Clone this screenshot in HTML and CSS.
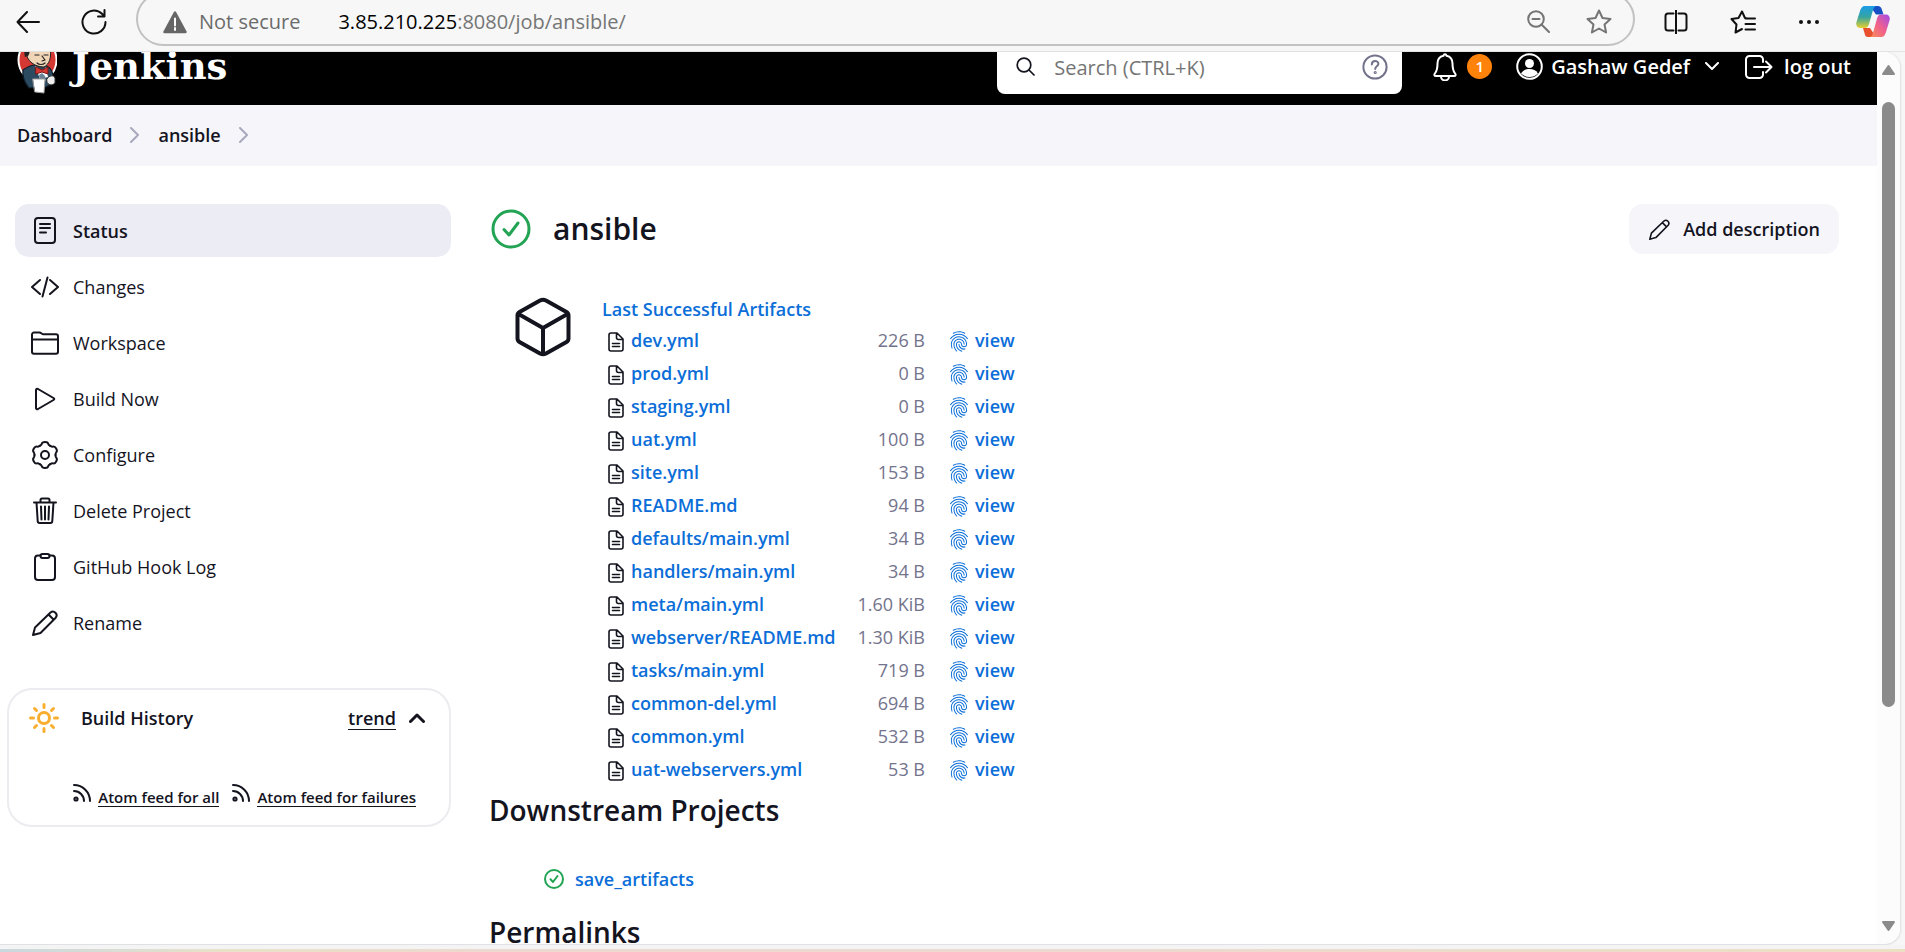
FILE: index.html
```html
<!DOCTYPE html>
<html lang="en">
<head>
<meta charset="utf-8">
<title>ansible [Jenkins]</title>
<link rel="stylesheet" href="styles.css">
</head>
<body>
<svg class="sprite" aria-hidden="true">
  <symbol id="doc" viewBox="0 0 16 20"><path d="M3 1h6l6 6v10a2 2 0 0 1-2 2H3a2 2 0 0 1-2-2V3a2 2 0 0 1 2-2zM8.500 1v4.500a2 2 0 0 0 2 2H15M4.500 11.500h7M4.500 14.500h7"/></symbol>
  <symbol id="print" viewBox="50 10 412 492"><path d="M390.42 75.28a10.45 10.45 0 01-5.32-1.44C340.72 50.08 302.35 40 256.35 40c-45.77 0-89.23 11.28-128.76 33.84C122 77 115.11 74.8 111.87 69a12.4 12.4 0 014.63-16.32A281.81 281.81 0 01256.35 16c49.23 0 92.23 11.28 139.39 36.48a12 12 0 014.85 16.08 11.3 11.3 0 01-10.17 6.72zM59.63 201.28a11.73 11.73 0 01-6.7-2.16 12.26 12.26 0 01-2.78-16.8c22.89-33.6 52-60 86.69-78.48 72.58-38.84 165.51-39.12 238.32-.24 34.68 18.48 63.8 44.64 86.69 78a12.29 12.29 0 01-2.78 16.8 11.26 11.26 0 01-16.18-2.88c-20.8-30.24-47.15-54-78.36-70.56-66.34-35.28-151.18-35.28-217.29.24-31.44 16.8-57.79 40.8-78.59 71a10 10 0 01-9.02 5.08zM204.1 491a10.66 10.66 0 01-8.09-3.6C175.9 466.48 165 453 149.55 424c-16-29.52-24.27-65.52-24.27-104.16 0-71.28 58.94-129.36 131.3-129.36S387.88 248.56 387.88 319.84a11.56 11.56 0 11-23.11 0c0-57.84-48.54-105.12-108.19-105.12S148.39 262 148.39 319.84c0 34.56 7.4 66.48 21.5 92.4 14.79 27.6 25 39.36 42.77 58.08a12.67 12.67 0 010 17 12.44 12.44 0 01-8.56 3.68zm165.75-44.4c-27.51 0-51.78-7.2-71.66-21.36a129.1 129.1 0 01-55-105.36 11.57 11.57 0 1123.12 0 104.28 104.28 0 0044.84 85.44c16.41 11.52 35.6 17 58.72 17a147.41 147.41 0 0024-2.4c6.24-1.2 12.25 3.12 13.4 9.84a11.92 11.92 0 01-9.47 13.92 152.28 152.28 0 01-27.95 2.88zM323.38 496a13 13 0 01-3-.48c-36.76-10.56-60.8-24.72-86-50.4-32.37-33.36-50.16-77.76-50.16-125.28 0-38.88 31.9-70.56 71.19-70.56s71.2 31.68 71.2 70.56c0 25.68 21.5 46.56 48.08 46.56s48.08-20.88 48.08-46.56c0-90.48-75.13-163.92-167.59-163.92-65.65 0-125.75 37.92-152.79 96.72-9 19.44-13.64 42.24-13.64 67.2 0 18.72 1.61 48.24 15.48 86.64 2.32 6.24-.69 13.2-6.7 15.36a11.34 11.34 0 01-14.79-7 276.39 276.39 0 01-16.88-95c0-28.8 5.32-55 15.72-77.76 30.75-67 98.94-110.4 173.6-110.4 105.18 0 190.71 84.24 190.71 187.92 0 38.88-31.9 70.56-71.2 70.56s-71.2-31.68-71.2-70.56c.01-25.68-21.49-46.56-48.07-46.56s-48.08 20.88-48.08 46.56c0 41 15.26 79.44 43.23 108.24 22 22.56 43 35 75.59 44.16 6.24 1.68 9.71 8.4 8.09 14.64a11.39 11.39 0 01-10.87 9.16z"/></symbol>
  <symbol id="pencil" viewBox="0 0 26 26"><path d="M1 25l2-7.500L18.500 2.500a3.700 3.700 0 0 1 5.200 5.200L8.500 23zM16.500 4.500l5 5M1 25l7.500-2"/></symbol>
  <symbol id="ok" viewBox="0 0 40 40"><circle cx="20" cy="20" r="18"/><path d="M13 20.500l5 5.500 9-12"/></symbol>
  <symbol id="rss" viewBox="0 0 18 18"><circle cx="3" cy="15" r="1.600"/><path d="M1 7a10 10 0 0 1 10 10M1 1a16 16 0 0 1 16 16"/></symbol>
  <symbol id="next" viewBox="0 0 10 16"><path d="M1 1l7 7-7 7"/></symbol>
</svg>

<header class="chrome">
  <button class="tool back" aria-label="Back"><svg width="24" height="22" viewBox="0 0 24 22"><path d="M23 11H1.500M11 1L1.500 11l9.500 10"/></svg></button>
  <button class="tool" aria-label="Refresh"><svg width="26" height="26" viewBox="0 0 26 26"><path d="M24.500 13A11.500 11.500 0 1 1 21 4.800L23.500 7.500M23.500 1v6.500H17"/></svg></button>
  <div class="address">
    <svg class="warn" width="24" height="24" viewBox="0 0 24 24"><path d="M12 2.500L22.500 22h-21z" fill="#666" stroke="#666" stroke-width="2.500" stroke-linejoin="round"/><path d="M12 8.500v7M12 18v2" stroke="#fff" stroke-width="2"/></svg>
    <span class="insecure">Not secure</span>
    <p class="url"><b>3.85.210.225</b>:8080/job/ansible/</p>
    <button class="tool grey" aria-label="Zoom"><svg width="23" height="23" viewBox="0 0 23 23"><circle cx="9" cy="9" r="7.800"/><path d="M5.500 9h7M14.500 14.500l7.500 7.500"/></svg></button>
    <button class="tool grey" aria-label="Favorite"><svg width="26" height="25" viewBox="0 0 26 25"><path d="M13 1.500l3.500 7.500 8 1-6 5.500 1.600 8L13 19.500l-7.100 4 1.600-8-6-5.500 8-1z"/></svg></button>
  </div>
  <div class="actions">
    <button class="tool" aria-label="Split screen"><svg width="24" height="24" viewBox="0 0 24 24"><path d="M9.500 3.500H4A2.500 2.500 0 0 0 1.500 6v12A2.500 2.500 0 0 0 4 20.500h5.500M12 0v24M14.500 3.500H20A2.500 2.500 0 0 1 22.500 6v12a2.500 2.500 0 0 1-2.500 2.500h-5.500"/></svg></button>
    <button class="tool" aria-label="Favorites"><svg width="26" height="24" viewBox="0 0 26 24"><path d="M17.500 8.500L15 8l-3-6.500L8.500 8l-7 1 5 5.500L5.500 22.500l6.500-3.500M15.500 8.500H25M15.500 14H25M15.500 19.500H25"/></svg></button>
    <button class="tool dots" aria-label="More"><svg width="22" height="6" viewBox="0 0 22 6"><circle cx="3" cy="3" r="2"/><circle cx="11" cy="3" r="2"/><circle cx="19" cy="3" r="2"/></svg></button>
    <button class="tool plain" aria-label="Copilot"><svg width="34" height="31" viewBox="0 0 34 31">
      <defs>
        <linearGradient id="ca" x1="0" y1="0" x2="0" y2="1"><stop offset="0" stop-color="#1a9be8"/><stop offset=".5" stop-color="#35a5a0"/><stop offset="1" stop-color="#e8d02d"/></linearGradient>
        <linearGradient id="cb" x1="1" y1="0" x2="0" y2="1"><stop offset="0" stop-color="#a24be8"/><stop offset=".5" stop-color="#f0608c"/><stop offset="1" stop-color="#f99254"/></linearGradient>
      </defs>
      <path d="M14 0h8c2 0 3 1 4 4l1.500 4.500H20z" fill="#1750c5"/>
      <path d="M12 31h8l-6-9H7l1.500 5c.6 3 1.500 4 3.500 4z" fill="#e8502e"/>
      <path d="M9 0h12c-2 0-3 1-4 4l-4 14c-.8 2.800-2 4-4 4H4c-3 0-4.500-3-3.500-6L4 5C5 2 6 0 9 0z" fill="url(#ca)"/>
      <path d="M25 31H13c2 0 3-1 4-4l4-14.500c.8-2.800 2-4 4-4h5c3 0 4.500 3 3.500 6L30 26c-1 3-2 5-5 5z" fill="url(#cb)"/>
    </svg></button>
  </div>
</header>

<div class="window">
  <div class="page">
    <header class="topbar">
      <a class="brand" href="#">
        <svg width="40" height="56" viewBox="0 0 40 56">
          <ellipse cx="20.500" cy="21" rx="19" ry="21" fill="#d33833"/>
          <path d="M6 31c4-3 8-5 13-5h8c5 1 8 5 9 10l1 8-8 4-17 1c-4-5-7-11-6-18z" fill="#2c4a60" stroke="#0d1c26" stroke-width="1.200"/>
          <path d="M9 12C9 5 14 2 21 2s12 3 12.500 10-1 13-6.500 16c-8 0-18-5-18-16z" fill="#f0d6b7" stroke="#222" stroke-width="1"/>
          <path d="M8 18C5 6 12 1 21 1s14 3 13 9c-6-3-16-3-20 0-2 2-1 5-3 7z" fill="#222" stroke="none"/>
          <path d="M18 16h4M27 16h4M25 17l3 4-3 1M20 24c2 2 6 2 8 0" stroke="#222" stroke-width="1.200"/>
          <path d="M18 27l8 5 3-4 2 10-8 2z" fill="#fff" stroke="none"/>
          <path d="M19 28l6 3 6-3v7l-6-2-6 2z" fill="#d33833" stroke="#7c1512" stroke-width="1"/>
          <path d="M22 36l3-2 3 3 1 5-6-1z" fill="#6b8294" stroke="none"/>
          <path d="M16 40h12l-1 14-9-1z" fill="#fff" stroke="#999" stroke-width="1"/>
          <path d="M30 40c2-4 7-4 8-1v5c-3 3-7 2-8-1z" fill="#eee" stroke="#333" stroke-width="1"/>
        </svg>
        <span>Jenkins</span>
      </a>
      <label class="search">
        <svg class="ink glass" width="19" height="19" viewBox="0 0 19 19"><circle cx="8" cy="8" r="6.800"/><path d="M13 13l5 5"/></svg>
        <input type="text" placeholder="Search (CTRL+K)" aria-label="Search">
        <svg class="help" width="26" height="26" viewBox="0 0 26 26"><circle cx="13" cy="13" r="11.600"/><path d="M9.800 10.500c0-4.600 6.600-4.300 6.600-.8 0 2.600-3.200 2.600-3.200 5.300"/><circle cx="13.200" cy="18.500" r=".6"/></svg>
      </label>
      <a class="bell" href="#" aria-label="Notifications"><svg width="24" height="28" viewBox="0 0 24 28"><path d="M12 1.200c-1.200 0-1.500 1.500-1.500 1.500C6.500 3.500 4.500 6.500 4.500 10.500c0 6-.8 7.500-2.300 9.500-1.400 1.800-1 3 .8 3h18c1.800 0 2.200-1.200.8-3-1.500-2-2.300-3.500-2.300-9.500 0-4-2-7-6-7.800 0 0-.3-1.500-1.500-1.500zM8 23.500a4 4 0 0 0 8 0"/></svg><span class="badge">1</span></a>
      <a class="user" href="#"><svg width="27" height="27" viewBox="0 0 27 27"><circle cx="13.500" cy="13.500" r="12.300"/><circle cx="13.500" cy="10.500" r="4.500" fill="#fff" stroke="none"/><path d="M5 20.500c2-3.500 5-4.500 8.500-4.500s6.500 1 8.500 4.500a12 12 0 0 1-17 0z" fill="#fff" stroke="none"/></svg>Gashaw Gedef<svg class="caret" width="14" height="9" viewBox="0 0 14 9"><path d="M1 1l6 6 6-6"/></svg></a>
      <a class="logout" href="#"><svg width="28" height="24" viewBox="0 0 28 24"><path d="M18 7V4.500A3.500 3.500 0 0 0 14.500 1h-10A3.500 3.500 0 0 0 1 4.500v15A3.500 3.500 0 0 0 4.500 23h10a3.500 3.500 0 0 0 3.500-3.500V17M9 12h17.500M21 6.500l5.500 5.500-5.500 5.500"/></svg>log out</a>
    </header>

    <nav class="crumbs">
      <a href="#">Dashboard</a><svg width="10" height="16"><use href="#next"/></svg>
      <a href="#">ansible</a><svg width="10" height="16"><use href="#next"/></svg>
    </nav>

    <div class="body">
      <aside class="side">
        <nav class="tasks">
          <a class="task active" href="#"><svg viewBox="0 0 28 28"><rect x="4" y="1" width="20" height="25" rx="3"/><path d="M9 7h10M9 11h10M9 15.500h6"/></svg>Status</a>
          <a class="task" href="#"><svg viewBox="0 0 28 28"><path d="M9 7l-8 7 8 7M19 7l8 7-8 7M16.500 4.500l-5 19"/></svg>Changes</a>
          <a class="task" href="#"><svg viewBox="0 0 28 28"><path d="M1 10V5.500A2 2 0 0 1 3 3.500h5.500c1.500 0 2 1.700 3.500 1.700h13a2 2 0 0 1 2 2v15.500a2 2 0 0 1-2 2H3a2 2 0 0 1-2-2V10.500h26"/></svg>Workspace</a>
          <a class="task" href="#"><svg viewBox="0 0 28 28"><path d="M5 5v18c0 1 1 1.500 2 1l15.500-9c1-.6 1-1.400 0-2L7 4C6 3.500 5 4 5 5z"/></svg>Build Now</a>
          <a class="task" href="#"><svg viewBox="-14 -14 28 28"><path id="tooth" d="M-5.250 -9.100C-3.700 -10 -3.400 -10.200 -3.200 -11.200C-2.900 -12.600 -2.200 -12.900 0 -12.900S2.900 -12.600 3.200 -11.200C3.400 -10.200 3.700 -10 5.250 -9.100"/><use href="#tooth" transform="rotate(60)"/><use href="#tooth" transform="rotate(120)"/><use href="#tooth" transform="rotate(180)"/><use href="#tooth" transform="rotate(240)"/><use href="#tooth" transform="rotate(300)"/><circle r="4"/></svg>Configure</a>
          <a class="task" href="#"><svg viewBox="0 0 28 28"><path d="M3 5.500h22M5.500 5.500l1.200 18.500a2 2 0 0 0 2 2h10.600a2 2 0 0 0 2-2L22.500 5.500M9.500 5V3a1.500 1.500 0 0 1 1.500-1.500h6A1.500 1.500 0 0 1 18.500 3v2M14 9.500v13M10 9.500l.5 13M18 9.500l-.5 13"/></svg>Delete Project</a>
          <a class="task" href="#"><svg viewBox="0 0 28 28"><path d="M9.500 2.500H7a3 3 0 0 0-3 3V24a3 3 0 0 0 3 3h14a3 3 0 0 0 3-3V5.500a3 3 0 0 0-3-3h-2.500"/><rect x="9.500" y="1" width="9" height="4" rx="2"/></svg>GitHub Hook Log</a>
          <a class="task" href="#"><svg viewBox="-1 -1 28 28"><use href="#pencil" width="26" height="26"/></svg>Rename</a>
        </nav>
        <section class="history">
          <div class="history-head">
            <svg class="sun" width="30" height="30" viewBox="0 0 30 30"><circle cx="15" cy="15" r="5.500"/><path d="M15 1.500v3M15 25.500v3M1.500 15h3M25.500 15h3M5.500 5.500l2 2M22.500 22.500l2 2M5.500 24.500l2-2M22.500 7.500l2-2"/></svg>
            <h2>Build History</h2>
            <a class="under" href="#">trend</a>
            <svg class="ink up" width="16" height="10" viewBox="0 0 16 10"><path d="M1.500 8.500L8 2l6.500 6.500"/></svg>
          </div>
          <div class="feeds">
            <a href="#"><svg width="18" height="18"><use href="#rss"/></svg><span class="under">Atom feed for all</span></a>
            <a href="#"><svg width="18" height="18"><use href="#rss"/></svg><span class="under">Atom feed for failures</span></a>
          </div>
        </section>
      </aside>

      <main class="main">
        <div class="title">
          <svg class="green" width="40" height="40"><use href="#ok"/></svg>
          <h1>ansible</h1>
          <button class="describe"><svg width="21" height="21"><use href="#pencil"/></svg>Add description</button>
        </div>
        <section class="artifacts">
          <svg class="cube" width="56" height="60" viewBox="0 0 56 60"><path d="M25 3.500L4.500 15A4 4 0 0 0 2.500 18.500v23A4 4 0 0 0 4.500 45L25 56.500q3 1.500 6 0L51.500 45a4 4 0 0 0 2-3.500v-23a4 4 0 0 0-2-3.500L31 3.500q-3-1.500-6 0zM3.500 17L28 31 52.500 17M28 31v26"/></svg>
          <div>
            <a class="link" href="#">Last Successful Artifacts</a>
            <table class="files">
              <tr><td><svg class="doc"><use href="#doc"/></svg></td><td><a class="link" href="#">dev.yml</a></td><td class="size">226 B</td><td><a class="link" href="#"><svg class="print"><use href="#print"/></svg>view</a></td></tr>
              <tr><td><svg class="doc"><use href="#doc"/></svg></td><td><a class="link" href="#">prod.yml</a></td><td class="size">0 B</td><td><a class="link" href="#"><svg class="print"><use href="#print"/></svg>view</a></td></tr>
              <tr><td><svg class="doc"><use href="#doc"/></svg></td><td><a class="link" href="#">staging.yml</a></td><td class="size">0 B</td><td><a class="link" href="#"><svg class="print"><use href="#print"/></svg>view</a></td></tr>
              <tr><td><svg class="doc"><use href="#doc"/></svg></td><td><a class="link" href="#">uat.yml</a></td><td class="size">100 B</td><td><a class="link" href="#"><svg class="print"><use href="#print"/></svg>view</a></td></tr>
              <tr><td><svg class="doc"><use href="#doc"/></svg></td><td><a class="link" href="#">site.yml</a></td><td class="size">153 B</td><td><a class="link" href="#"><svg class="print"><use href="#print"/></svg>view</a></td></tr>
              <tr><td><svg class="doc"><use href="#doc"/></svg></td><td><a class="link" href="#">README.md</a></td><td class="size">94 B</td><td><a class="link" href="#"><svg class="print"><use href="#print"/></svg>view</a></td></tr>
              <tr><td><svg class="doc"><use href="#doc"/></svg></td><td><a class="link" href="#">defaults/main.yml</a></td><td class="size">34 B</td><td><a class="link" href="#"><svg class="print"><use href="#print"/></svg>view</a></td></tr>
              <tr><td><svg class="doc"><use href="#doc"/></svg></td><td><a class="link" href="#">handlers/main.yml</a></td><td class="size">34 B</td><td><a class="link" href="#"><svg class="print"><use href="#print"/></svg>view</a></td></tr>
              <tr><td><svg class="doc"><use href="#doc"/></svg></td><td><a class="link" href="#">meta/main.yml</a></td><td class="size">1.60 KiB</td><td><a class="link" href="#"><svg class="print"><use href="#print"/></svg>view</a></td></tr>
              <tr><td><svg class="doc"><use href="#doc"/></svg></td><td><a class="link" href="#">webserver/README.md</a></td><td class="size">1.30 KiB</td><td><a class="link" href="#"><svg class="print"><use href="#print"/></svg>view</a></td></tr>
              <tr><td><svg class="doc"><use href="#doc"/></svg></td><td><a class="link" href="#">tasks/main.yml</a></td><td class="size">719 B</td><td><a class="link" href="#"><svg class="print"><use href="#print"/></svg>view</a></td></tr>
              <tr><td><svg class="doc"><use href="#doc"/></svg></td><td><a class="link" href="#">common-del.yml</a></td><td class="size">694 B</td><td><a class="link" href="#"><svg class="print"><use href="#print"/></svg>view</a></td></tr>
              <tr><td><svg class="doc"><use href="#doc"/></svg></td><td><a class="link" href="#">common.yml</a></td><td class="size">532 B</td><td><a class="link" href="#"><svg class="print"><use href="#print"/></svg>view</a></td></tr>
              <tr><td><svg class="doc"><use href="#doc"/></svg></td><td><a class="link" href="#">uat-webservers.yml</a></td><td class="size">53 B</td><td><a class="link" href="#"><svg class="print"><use href="#print"/></svg>view</a></td></tr>
            </table>
          </div>
        </section>
        <h2>Downstream Projects</h2>
        <ul class="downstream"><li><svg class="green small" width="20" height="20"><use href="#ok"/></svg><a class="link" href="#">save_artifacts</a></li></ul>
        <h2>Permalinks</h2>
      </main>
    </div>
  </div>
  <div class="scroll" aria-hidden="true">
    <svg width="15" height="12" viewBox="0 0 15 12"><path d="M7.500 2L13 10H2z"/></svg>
    <div class="track"><div class="thumb"></div></div>
    <svg width="15" height="12" viewBox="0 0 15 12"><path d="M7.500 10L13 2H2z"/></svg>
  </div>
</div>
<footer class="edge"></footer>
</body>
</html>
```

FILE: styles.css
```css
* { box-sizing: border-box; }
body {
  margin: 0;
  height: 100vh;
  display: flex;
  flex-direction: column;
  overflow: hidden;
  background: #f7f7f7;
  color: #14141f;
  font: 18px/24px "Open Sans", "Noto Sans", sans-serif;
}
h1, h2, p, ul { margin: 0; padding: 0; }
a { color: inherit; text-decoration: none; }
button { font: inherit; color: inherit; border: 0; background: none; padding: 0; }
svg { flex: none; fill: none; stroke: currentColor; stroke-width: 2; stroke-linecap: round; stroke-linejoin: round; }
.sprite { position: absolute; width: 0; height: 0; }

/* browser toolbar */
.chrome { flex: none; height: 52px; padding: 0 15px 8px 16px; display: flex; align-items: center; border-bottom: 1px solid #e4e4e4; overflow: hidden; }
.tool { display: flex; color: #111; }
.tool.grey { color: #757575; }
.dots svg { fill: currentColor; stroke: none; }
.plain svg { stroke: none; }
.back { margin-right: 41px; }
.address {
  flex: 1; height: 54px; margin: -6px 29px 0 29px; padding: 6px 21px 0 25px;
  display: flex; align-items: center;
  border: 2px solid #c2c2c2; border-radius: 27px;
  color: #6b6b6b; font-size: 20px;
}
.insecure { margin: 0 38px 0 12px; }
.url { flex: 1; color: #757575; }
.url b { color: #000; font-weight: 400; }
.address .tool + .tool { margin-left: 36px; }
.actions { display: flex; align-items: center; gap: 42px; }
.actions .plain { margin-left: -6px; }

/* page frame */
.window { flex: 1; min-height: 0; margin-right: 5px; display: flex; background: #fff; border-radius: 0 16px 16px 0; border-bottom: 1px solid #dfe1e5; box-shadow: 1px 0 2px #ddd; overflow: hidden; }
.page { flex: 1; min-width: 0; overflow: hidden; }
.scroll { width: 23px; padding: 12px 5px; display: flex; flex-direction: column; align-items: center; background: #fcfcfc; }
.scroll svg { fill: #8b8b8b; stroke: #8b8b8b; }
.track { flex: 1; align-self: stretch; padding-top: 26px; }
.thumb { height: 74%; border-radius: 7px; background: #8b8b8b; width: 13px; }
.edge { flex: none; height: 7px; border-top: 4px solid #f4f4f5; background: linear-gradient(90deg, #c9d8de, #e9e2c8 12%, #ecd9cf 25%, #ecd9cf 60%, #ece0c4); }

/* Jenkins header */
.topbar { height: 77px; margin-top: -24px; padding: 0 26px 0 17px; display: flex; align-items: center; background: #000; color: #fff; font-size: 20px; line-height: 28px; font-weight: 600; }
.topbar a { display: flex; align-items: center; }
.brand { margin-right: auto; gap: 15px; font: 700 37px/40px "DejaVu Serif", serif; }
.brand span { padding-bottom: 2px; }
.search { width: 405px; height: 54px; padding: 0 14px 0 19px; display: flex; align-items: center; gap: 19px; background: #fff; border-radius: 8px; }
.search input { flex: 1; min-width: 0; border: 0; padding: 2px 0 0; background: none; font: 400 20px/28px "Open Sans", sans-serif; }
.search input::placeholder { color: #757575; opacity: 1; }
.ink { color: #14141f; }
.glass { stroke-width: 1.7; }
.help { color: #73738c; }
.bell { margin-left: 31px; gap: 10px; }
.badge { width: 25px; height: 25px; border-radius: 50%; background: #ff820a; font-size: 15px; line-height: 25px; text-align: center; }
.user { margin-left: 24px; gap: 8px; }
.caret { margin-left: 7px; }
.logout { margin-left: 26px; gap: 11px; }

.crumbs { height: 61px; padding: 0 17px 2px; display: flex; align-items: center; gap: 18px; background: #f5f5fa; font-weight: 600; }
.crumbs svg { color: #a9a9bd; }

.body { display: flex; padding: 38px 38px 0 7px; }
.side { flex: none; width: 444px; }
.tasks { display: flex; flex-direction: column; gap: 3px; padding-left: 8px; }
.task { height: 53px; padding: 0 16px; display: flex; align-items: center; gap: 14px; border-radius: 14px; }
.task svg { width: 28px; height: 28px; }
.active { background: #ececf5; font-weight: 600; }

.history { margin-top: 39px; height: 139px; padding: 13px 33px 0 20px; border: 2px solid #ececf0; border-radius: 25px; }
.history-head { display: flex; align-items: center; }
.sun { color: #f9ae2f; stroke-width: 3; }
.history h2 { flex: 1; margin-left: 22px; font-size: 18px; line-height: 30px; font-weight: 600; }
.under { border-bottom: 1px solid #14141f; font-weight: 600; line-height: 22px; }
.up { margin: 0 -9px 0 13px; stroke-width: 3; }
.feeds { margin-top: 51px; display: flex; justify-content: flex-end; gap: 13px; font-size: 15px; }
.feeds a { display: flex; gap: 7px; }
.feeds .under { line-height: 18px; margin-top: 4px; }

.main { flex: 1; min-width: 0; padding-left: 38px; }
.title { display: flex; align-items: center; }
.title h1 { flex: 1; margin-left: 22px; font-size: 30px; line-height: 50px; font-weight: 600; }
.green { color: #23a455; margin-left: 2px; stroke-width: 3; }
.small { stroke-width: 4; }
.describe { height: 50px; padding: 0 19px 0 20px; display: flex; align-items: center; gap: 13px; border-radius: 14px; background: #f5f5fa; font-weight: 600; }
.artifacts { margin-top: 43px; display: flex; gap: 31px; padding-left: 26px; }
.cube { stroke-width: 4; }
.link { color: #0b6ed8; font-weight: 600; }
.files { border-collapse: collapse; margin-top: 2px; }
.files td { height: 33px; padding: 0; }
.doc { display: block; width: 16px; height: 20px; margin: 5px 7px 0 6px; stroke-width: 1.6; }
.files .size { color: #73738c; text-align: right; padding-left: 22px; }
.files td:last-child { padding-left: 25px; }
.files td .link { display: flex; align-items: center; }
.print { width: 18px; height: 21px; margin: 4px 7px 0 0; fill: currentColor; stroke: none; }
.main h2 { font-size: 28px; line-height: 50px; font-weight: 600; }
.downstream { list-style: none; padding: 32px 0 16px 53px; }
.downstream li { display: flex; align-items: center; gap: 11px; }
```
